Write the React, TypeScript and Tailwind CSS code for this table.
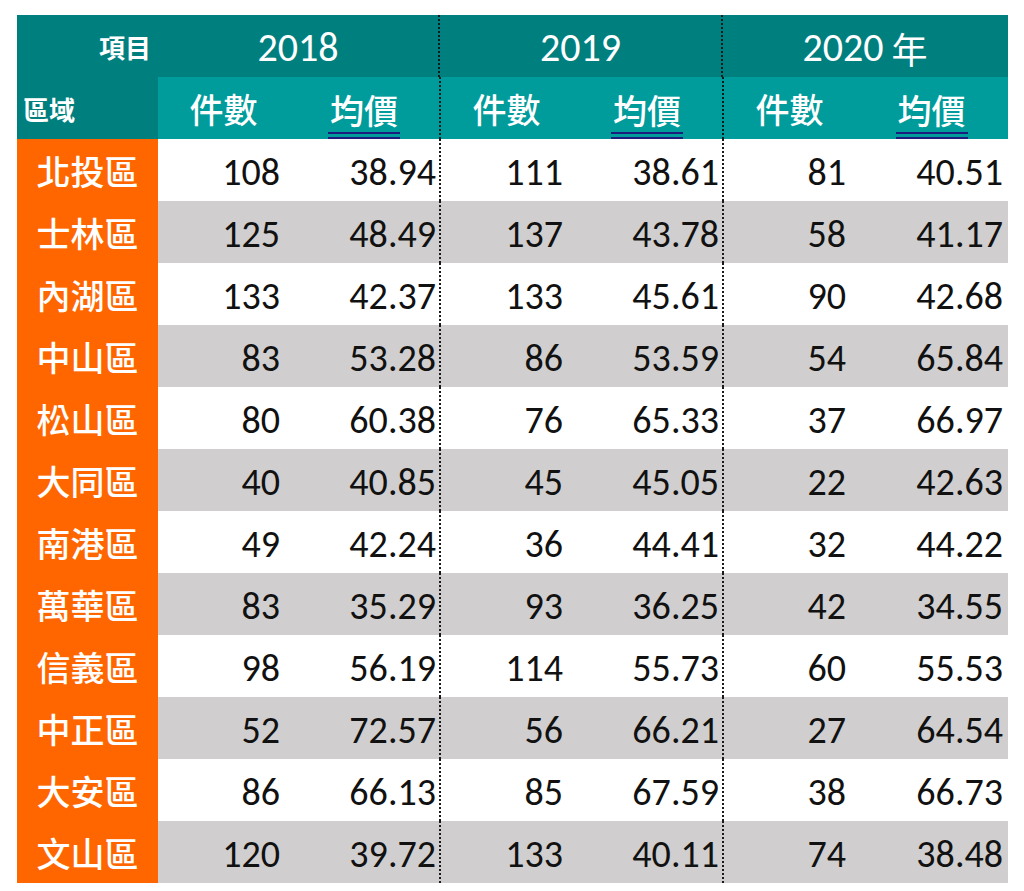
const rows: [string, number, string, number, string, number, string][] = [
  ["北投區", 108, "38.94", 111, "38.61", 81, "40.51"],
  ["士林區", 125, "48.49", 137, "43.78", 58, "41.17"],
  ["內湖區", 133, "42.37", 133, "45.61", 90, "42.68"],
  ["中山區", 83, "53.28", 86, "53.59", 54, "65.84"],
  ["松山區", 80, "60.38", 76, "65.33", 37, "66.97"],
  ["大同區", 40, "40.85", 45, "45.05", 22, "42.63"],
  ["南港區", 49, "42.24", 36, "44.41", 32, "44.22"],
  ["萬華區", 83, "35.29", 93, "36.25", 42, "34.55"],
  ["信義區", 98, "56.19", 114, "55.73", 60, "55.53"],
  ["中正區", 52, "72.57", 56, "66.21", 27, "64.54"],
  ["大安區", 86, "66.13", 85, "67.59", 38, "66.73"],
  ["文山區", 120, "39.72", 133, "40.11", 74, "38.48"],
];

const cjk = "font-['Noto_Sans_CJK_TC',sans-serif]";
const num = "font-['Carlito','Lato','Noto_Sans_CJK_TC',sans-serif]";
const dotted = "border-r-2 border-dotted border-[#1a1a1a]";

const SubHead = ({ last }: { last?: boolean }) => (
  <>
    <div className={`w-[131px] flex items-center justify-center text-white text-[34px] font-medium ${cjk}`}>
      件數
    </div>
    <div
      className={`flex items-end justify-center text-white text-[34px] font-medium ${cjk} ${
        last ? "w-[153px]" : "w-[152px]"
      } ${last ? "" : dotted}`}
    >
      <span className="border-b-[7px] border-double border-[#1c1c7c] leading-[44px] px-[2px]">均價</span>
    </div>
  </>
);

export default function App() {
  return (
    <div className="min-h-[891px] w-[1024px] bg-white pt-[15px] pl-[17px]">
      <div className="w-[991px]">
        {/* header */}
        <div className="flex">
          <div className={`w-[142px] h-[124px] bg-[#007f7f] flex flex-col text-white font-bold text-[26px] ${cjk}`}>
            <div className="h-[62px] flex items-center justify-end pr-[7px]">項目</div>
            <div className="h-[62px] flex items-center pl-[6px]">區域</div>
          </div>
          <div className="flex flex-col">
            <div className={`flex h-[62px] bg-[#007f7f] text-white text-[40px] ${num}`}>
              <div className={`w-[282px] flex items-center justify-center pt-[3px] ${dotted}`}>2018</div>
              <div className={`w-[283px] flex items-center justify-center pt-[3px] ${dotted}`}>2019</div>
              <div className="w-[284px] flex items-center justify-center pt-[3px]">
                2020 <span className={`ml-[8px] text-[36px] ${cjk}`}>年</span>
              </div>
            </div>
            <div className="flex h-[62px] bg-[#009b9b]">
              <SubHead />
              <SubHead />
              <SubHead last />
            </div>
          </div>
        </div>
        {/* body */}
        {rows.map((r, i) => (
          <div key={r[0]} className={`flex h-[62px] ${i % 2 ? "bg-[#d0cece]" : "bg-white"}`}>
            <div className={`w-[142px] bg-[#ff6600] flex items-center justify-center text-white text-[34px] font-medium ${cjk}`}>
              {r[0]}
            </div>
            {[1, 3, 5].map((c, g) => (
              <div key={c} className={`flex text-[38px] text-[#111] ${num}`}>
                <div className="w-[131px] flex items-center justify-end pr-[9px] pt-[4px]">{r[c]}</div>
                <div
                  className={`flex items-center justify-end pt-[4px] ${g === 2 ? "w-[153px] pr-[5px]" : "w-[152px] pr-[3px]"} ${
                    g < 2 ? dotted : ""
                  }`}
                >
                  {r[c + 1]}
                </div>
              </div>
            ))}
          </div>
        ))}
      </div>
    </div>
  );
}
